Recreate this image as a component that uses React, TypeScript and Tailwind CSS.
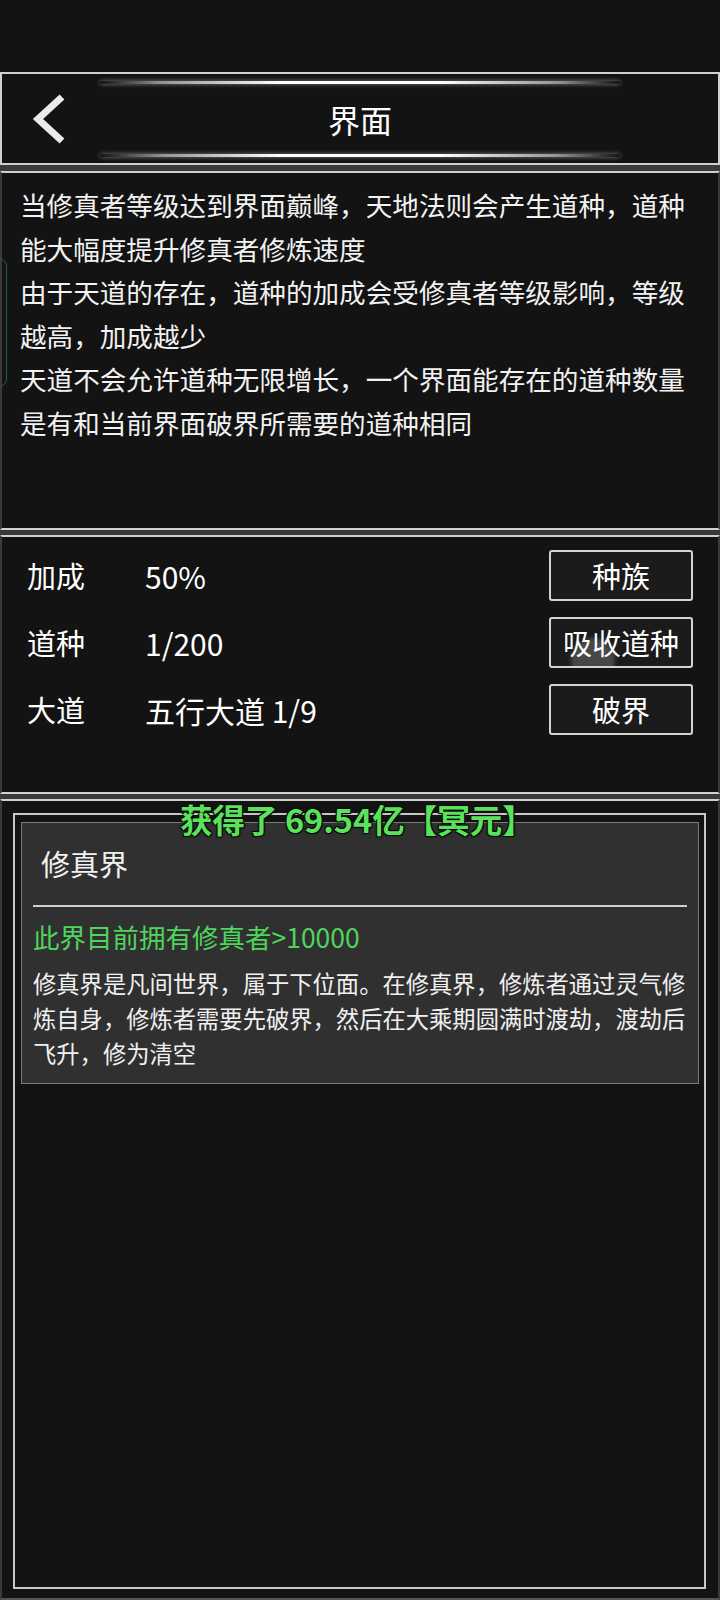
import React from "react";

const stats = [
  { label: "加成", value: "50%", action: "种族" },
  { label: "道种", value: "1/200", action: "吸收道种" },
  { label: "大道", value: "五行大道 1/9", action: "破界" },
];

const intro = [
  "当修真者等级达到界面巅峰，天地法则会产生道种，道种",
  "能大幅度提升修真者修炼速度",
  "由于天道的存在，道种的加成会受修真者等级影响，等级",
  "越高，加成越少",
  "天道不会允许道种无限增长，一个界面能存在的道种数量",
  "是有和当前界面破界所需要的道种相同",
];

function GlowLine() {
  return (
    <div className="mx-auto h-[3px] w-[520px] rounded-full bg-[linear-gradient(90deg,rgba(255,255,255,0)_0%,rgba(255,255,255,0.55)_12%,#ffffff_35%,#ffffff_65%,rgba(255,255,255,0.55)_88%,rgba(255,255,255,0)_100%)] shadow-[0_0_4px_rgba(255,255,255,0.5)]" />
  );
}

function Band({ h }: { h: string }) {
  return <div className={`${h} bg-[#3a3a3a]`} />;
}

export default function App() {
  return (
    <main className="relative w-[720px] h-[1600px] bg-[#131313] text-white font-['Noto_Sans_CJK_SC','Noto_Sans',sans-serif] overflow-hidden flex flex-col pt-[72px]">
      {/* header */}
      <header className="relative h-[93px] border-2 border-[#cfcfcf] flex flex-col justify-between pt-[7px] pb-[6px]">
        <GlowLine />
        <GlowLine />
        <div className="absolute inset-0 flex items-center justify-center">
          <h1 className="text-[32px] leading-none">界面</h1>
        </div>
        <button className="absolute left-[26px] top-[19px]">
          <svg width="44" height="56" viewBox="0 0 44 56">
            <polyline
              points="34,4 10,26 34,48"
              fill="none"
              stroke="#ebebeb"
              strokeWidth="7"
            />
          </svg>
        </button>
      </header>
      <Band h="h-[6px]" />

      {/* intro text */}
      <section className="h-[359px] border-y-2 border-y-[#cfcfcf] border-x-2 border-x-[#3a3a3a] pt-[10px] pl-[18px]">
        {intro.map((line) => (
          <p key={line} className="text-[26.6px] leading-[43.6px] whitespace-nowrap text-[#f2f2f2]">
            {line}
          </p>
        ))}
      </section>
      <Band h="h-[5px]" />

      {/* stats */}
      <section className="h-[259px] border-y-2 border-y-[#cfcfcf] border-x-2 border-x-[#3a3a3a] pt-[13px] flex flex-col gap-[16px]">
        {stats.map((s) => (
          <div key={s.label} className="h-[51px] flex items-center">
            <span className="w-[143px] shrink-0 pl-[25px] text-[29px] leading-none">{s.label}</span>
            <span className="flex-1 text-[30px] leading-none">{s.value}</span>
            <button className="relative mr-[25px] w-[144px] h-[51px] rounded-[3px] border-2 border-[#d4d4d4] bg-[#1b1b1b] text-[29px] leading-none text-white overflow-hidden">
              {s.action === "吸收道种" && (
                <span className="absolute left-[20px] top-[19px] w-[44px] h-[44px] rounded-full bg-white/20 blur-[2px]" />
              )}
              <span className="relative">{s.action}</span>
            </button>
          </div>
        ))}
      </section>
      <Band h="h-[5px]" />

      {/* realm list */}
      <section className="flex-1 flex border-y-2 border-y-[#cfcfcf] border-x-2 border-x-[#3a3a3a] border-b-[#555555]">
        <div className="flex-1 mt-[12px] ml-[11px] mr-[12px] mb-[9px] border-2 border-[#c8c8c8]">
          <div className="mt-[7px] ml-[6px] mr-[5px] border border-[#7c7c7c] bg-[#303030] px-[11px] pb-[12px]">
            <h2 className="pt-[23px] pl-[8px] text-[29px] leading-[34px] text-[#f2f2f2]">修真界</h2>
            <div className="mt-[25px] h-[2px] bg-[#cfcfcf]" />
            <p className="mt-[13px] text-[26.5px] leading-[34px] text-[#4fd45c]">此界目前拥有修真者&gt;10000</p>
            <p className="mt-[12px] text-[23.3px] leading-[35px] text-[#f0f0f0]">
              修真界是凡间世界，属于下位面。在修真界，修炼者通过灵气修炼自身，修炼者需要先破界，然后在大乘期圆满时渡劫，渡劫后飞升，修为清空
            </p>
          </div>
        </div>
      </section>

      {/* toast */}
      <div className="absolute left-[180px] top-[797px] text-[32.5px] font-bold leading-[44px] whitespace-nowrap text-[#5ae35a] [text-shadow:1px_1px_0_#0a0a0a,-1px_-1px_0_#0a0a0a,1px_-1px_0_#0a0a0a,-1px_1px_0_#0a0a0a,0_0_3px_#000]">
        获得了 69.54亿【冥元】
      </div>

      {/* side tab */}
      <div className="absolute left-[-14px] top-[258px] w-[21px] h-[129px] rounded-[8px] border-[1.5px] border-[#2b5a51]" />
    </main>
  );
}
